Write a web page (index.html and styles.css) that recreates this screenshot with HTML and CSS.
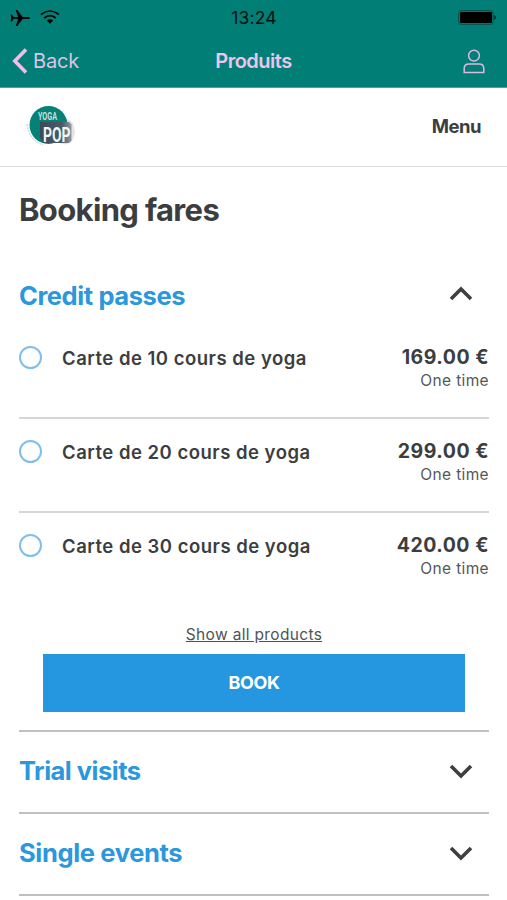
FILE: index.html
```html
<!DOCTYPE html>
<html lang="en">
<head>
<meta charset="utf-8">
<title>Produits</title>
<link rel="stylesheet" href="styles.css">
</head>
<body>
<header class="app-header">
  <div class="status">
    <div class="signals">
      <svg width="20" height="18" viewBox="0 0 20 18"><path d="M20 9c0 .7-.8 1-2 1h-5.400L7.300 17H5.700l2.500-6.900-4.500-.3-1.700 2.800H.6L1.200 9 .6 5.400H2l1.700 2.800 4.500-.3L5.700 1h1.600l5.300 7H18c1.200 0 2 .3 2 1z"/></svg>
      <svg width="20" height="16" viewBox="0 0 20 16"><g fill="none" stroke="#000" stroke-width="1.700"><path d="M1 5.500Q10-1.500 19 5.500M4.200 9Q10 4.200 15.800 9"/></g><path d="M6.900 11.500Q10 9 13.100 11.500L10 14.700z"/></svg>
    </div>
    <span class="clock">13:24</span>
    <svg class="battery" width="40" height="15" viewBox="0 0 40 15"><rect x=".7" y=".7" width="34.500" height="13.600" rx="2.500" fill="none" stroke="#034c48" stroke-width="1"/><rect x="2" y="2" width="32" height="11" rx="1"/><path d="M36.500 5Q39 7.500 36.500 10z"/></svg>
  </div>
  <nav class="nav">
    <a class="back"><svg width="16" height="28" viewBox="0 0 16 28"><path d="M14 2.500 2.800 14 14 25.500" fill="none" stroke="#f3bde9" stroke-width="3.600"/></svg><span class="back-label">Back</span></a>
    <span class="title">Produits</span>
    <svg class="user" width="22" height="25" viewBox="0 0 22 25"><g fill="none" stroke="#dfb8e0" stroke-width="1.500"><circle cx="11" cy="6.600" r="5.400"/><path d="M1.200 23.500v-4Q1.200 15 6 15h10q4.800 0 4.800 4.500v4z"/></g></svg>
  </nav>
</header>
<div class="site-bar">
  <svg class="logo" width="54" height="46" viewBox="0 0 54 46">
    <defs><linearGradient id="plate"><stop offset="0" stop-color="#3b4c58"/><stop offset=".7" stop-color="#4c5a65"/><stop offset="1" stop-color="#9299a1"/></linearGradient></defs>
    <ellipse cx="41" cy="27.500" rx="10" ry="13" fill="#e4e5e9"/>
    <path d="M3 20Q5 36 19 41" fill="none" stroke="#c6dfdc" stroke-width="1.500" stroke-dasharray="2 1"/>
    <circle cx="24.500" cy="21" r="19" fill="#078177"/>
    <path d="M16 18h29l2.500 2.500v16L45 39H19.500L16 34z" fill="url(#plate)"/>
    <text x="14" y="16" class="logo-yoga" textLength="19" lengthAdjust="spacingAndGlyphs">YOGA</text>
    <text x="19" y="38" class="logo-pop" textLength="27.500" lengthAdjust="spacingAndGlyphs">POP</text>
  </svg>
  <span class="menu">Menu</span>
</div>
<main class="content">
  <h1 class="heading">Booking fares</h1>
  <section>
    <div class="section-head first"><h2 class="h-credit">Credit passes</h2><svg class="chev chev-up" width="24" height="16" viewBox="0 0 24 16"><path d="M2 13 12 3l10 10"/></svg></div>
    <ul class="passes">
      <li class="pass"><span class="radio"></span><span class="name">Carte de 10 cours de yoga</span><span class="cost"><b class="price">169.00 €</b><span class="term">One time</span></span></li>
      <li class="pass"><span class="radio"></span><span class="name">Carte de 20 cours de yoga</span><span class="cost"><b class="price">299.00 €</b><span class="term">One time</span></span></li>
      <li class="pass"><span class="radio"></span><span class="name">Carte de 30 cours de yoga</span><span class="cost"><b class="price">420.00 €</b><span class="term">One time</span></span></li>
    </ul>
    <a class="show-all">Show all products</a>
    <button class="book">BOOK</button>
  </section>
  <section class="section-head closed"><h2 class="h-trial">Trial visits</h2><svg class="chev" width="24" height="16" viewBox="0 0 24 16"><path d="M2 3l10 10L22 3"/></svg></section>
  <section class="section-head closed last"><h2 class="h-single">Single events</h2><svg class="chev" width="24" height="16" viewBox="0 0 24 16"><path d="M2 3l10 10L22 3"/></svg></section>
</main>
</body>
</html>
```
FILE: styles.css
```css
* { box-sizing: border-box; }
body { margin: 0; height: 900px; overflow: hidden; background: #fff; color: #3b3e41; font-family: Inter, "Liberation Sans", sans-serif; }
svg { display: block; flex: none; }
h1, h2, ul { margin: 0; padding: 0; }
.app-header { height: 88px; background: #017f77; border-bottom: 1px solid #4aa39d; }
.status { height: 35px; display: grid; grid-template-columns: 1fr auto 1fr; align-items: center; padding: 0 9px 0 10px; color: #00110f; }
.signals { display: flex; gap: 10px; align-items: center; }
.signals svg:last-child { margin-top: -2px; }
.clock { font-size: 17.5px; letter-spacing: .2px; }
.battery { justify-self: end; }
.nav { height: 52px; display: grid; grid-template-columns: 1fr auto 1fr; align-items: center; padding: 0 12px; color: #efc4ea; }
.back { display: flex; align-items: center; gap: 5px; font-size: 20px; letter-spacing: -.2px; color: #dfc2e5; }
.title { font-size: 20px; font-weight: 600; letter-spacing: -.5px; }
.user { justify-self: end; margin-right: 10px; }
.site-bar { height: 79px; border-bottom: 1px solid #dcdede; display: flex; align-items: center; justify-content: space-between; padding: 0 26px 0 24px; }
.logo-yoga, .logo-pop { font-family: Roboto, sans-serif; font-weight: 700; fill: #eef5f6; }
.logo-yoga { font-size: 11.5px; fill: #c4dfdf; }
.logo-pop { font-size: 21px; }
.menu { font-size: 18.5px; font-weight: 700; letter-spacing: -.5px; margin-top: -2px; }
.content { padding: 0 18px 0 19px; }
.heading { height: 87px; line-height: 86px; font-size: 31px; font-weight: 700; letter-spacing: -.65px; }
.section-head { display: flex; align-items: center; justify-content: space-between; padding-right: 16px; }
.section-head h2 { margin-top: -3px; font-size: 25.5px; font-weight: 700; letter-spacing: -.5px; color: #2b97dc; }
.section-head .h-credit { margin-top: -1px; letter-spacing: -.4px; }
.section-head .h-single { letter-spacing: -.35px; }
.first { height: 84px; }
.chev { margin-top: -2px; fill: none; stroke: #3d3f41; stroke-width: 3.6; }
.chev-up { margin-top: -5px; }
.passes { list-style: none; }
.pass { height: 94px; display: flex; align-items: flex-start; padding-top: 21px; border-bottom: 2px solid #d5d6d6; }
.pass:first-child { height: 81px; padding-top: 8px; }
.pass:last-child { border-bottom-color: transparent; }
.radio { width: 23px; height: 23px; border: 2px solid #7fbfe9; border-radius: 50%; }
.name { margin-left: 20px; font-size: 18.5px; line-height: 24px; font-weight: 600; letter-spacing: .5px; }
.cost { margin-left: auto; display: grid; justify-items: end; }
.price { font-size: 19.5px; line-height: 22px; letter-spacing: .5px; }
.term { font-size: 15.5px; line-height: 26px; letter-spacing: .35px; color: #55585a; }
.show-all { display: block; width: max-content; margin: 18px auto 0; font-size: 15.5px; line-height: 20px; letter-spacing: .33px; text-decoration: underline; color: #505355; }
.book { display: block; width: 422px; height: 58px; margin: 9px auto 18px 24px; padding: 0 0 2px; border: 0; background: #2497e0; color: #fff; font: 700 18px Inter, sans-serif; letter-spacing: -.4px; }
.closed { height: 82px; border-top: 2px solid #bfc0c0; }
.last { height: 84px; border-bottom: 2px solid #bfc0c0; }
```
